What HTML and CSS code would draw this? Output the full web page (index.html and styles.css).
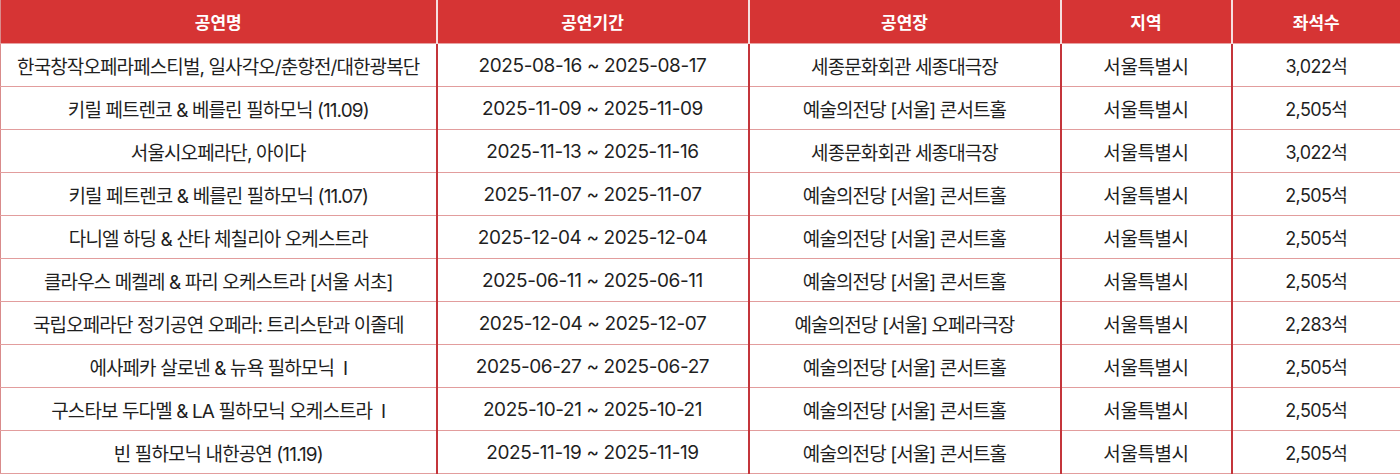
FILE: index.html
```html
<!DOCTYPE html>
<html lang="ko">
<head>
<meta charset="utf-8">
<link rel="stylesheet" href="styles.css">
</head>
<body>
<table class="perf">
  <colgroup>
    <col class="c-name"><col class="c-period"><col class="c-venue"><col class="c-region"><col class="c-seats">
  </colgroup>
  <thead>
    <tr><th>공연명</th><th>공연기간</th><th>공연장</th><th>지역</th><th>좌석수</th></tr>
  </thead>
  <tbody>
    <tr><td>한국창작오페라페스티벌, 일사각오/춘향전/대한광복단</td><td>2025-08-16 ~ 2025-08-17</td><td>세종문화회관 세종대극장</td><td>서울특별시</td><td>3,022석</td></tr>
    <tr><td>키릴 페트렌코 &amp; 베를린 필하모닉 (11.09)</td><td>2025-11-09 ~ 2025-11-09</td><td>예술의전당 [서울] 콘서트홀</td><td>서울특별시</td><td>2,505석</td></tr>
    <tr><td>서울시오페라단, 아이다</td><td>2025-11-13 ~ 2025-11-16</td><td>세종문화회관 세종대극장</td><td>서울특별시</td><td>3,022석</td></tr>
    <tr><td>키릴 페트렌코 &amp; 베를린 필하모닉 (11.07)</td><td>2025-11-07 ~ 2025-11-07</td><td>예술의전당 [서울] 콘서트홀</td><td>서울특별시</td><td>2,505석</td></tr>
    <tr><td>다니엘 하딩 &amp; 산타 체칠리아 오케스트라</td><td>2025-12-04 ~ 2025-12-04</td><td>예술의전당 [서울] 콘서트홀</td><td>서울특별시</td><td>2,505석</td></tr>
    <tr><td>클라우스 메켈레 &amp; 파리 오케스트라 [서울 서초]</td><td>2025-06-11 ~ 2025-06-11</td><td>예술의전당 [서울] 콘서트홀</td><td>서울특별시</td><td>2,505석</td></tr>
    <tr><td>국립오페라단 정기공연 오페라: 트리스탄과 이졸데</td><td>2025-12-04 ~ 2025-12-07</td><td>예술의전당 [서울] 오페라극장</td><td>서울특별시</td><td>2,283석</td></tr>
    <tr><td>에사페카 살로넨 &amp; 뉴욕 필하모닉 &nbsp;I</td><td>2025-06-27 ~ 2025-06-27</td><td>예술의전당 [서울] 콘서트홀</td><td>서울특별시</td><td>2,505석</td></tr>
    <tr><td>구스타보 두다멜 &amp; LA 필하모닉 오케스트라 &nbsp;I</td><td>2025-10-21 ~ 2025-10-21</td><td>예술의전당 [서울] 콘서트홀</td><td>서울특별시</td><td>2,505석</td></tr>
    <tr><td>빈 필하모닉 내한공연 (11.19)</td><td>2025-11-19 ~ 2025-11-19</td><td>예술의전당 [서울] 콘서트홀</td><td>서울특별시</td><td>2,505석</td></tr>
  </tbody>
</table>
</body>
</html>
```
FILE: styles.css
```css
html, body {
  margin: 0;
  padding: 0;
  background: #ffffff;
}
body {
  font-family: "Inter", "Noto Sans CJK KR", sans-serif;
  color: #1f1f1f;
}
.perf {
  width: 1400px;
  table-layout: fixed;
  border-collapse: collapse;
  border-left: 1px solid #d98b8b;
  border-right: 1px solid #e6b5b5;
}
.c-name { width: 436px; }
.c-period { width: 312px; }
.c-venue { width: 312px; }
.c-region { width: 171px; }
.c-seats { width: 169px; }
.perf th {
  height: 43px;
  padding: 0;
  background: #d63434;
  color: #ffffff;
  font-size: 17px;
  font-weight: 700;
  text-align: center;
  border-left: 2px solid #f6dede;
  border-bottom: 1px solid #e7a3a3;
}
.perf th:first-child { border-left: none; }
.perf td {
  height: 42px;
  padding: 0;
  font-size: 19px;
  font-weight: 400;
  letter-spacing: -0.9px;
  text-align: center;
  border-left: 2px solid #c4353b;
  border-bottom: 1px solid #e29d9d;
}
.perf td:first-child { border-left: none; }
.perf td:nth-child(2) { letter-spacing: -0.4px; }
.perf td:nth-child(4) { letter-spacing: -0.4px; }
.perf td:nth-child(5) { font-size: 18px; letter-spacing: -0.6px; }
```
